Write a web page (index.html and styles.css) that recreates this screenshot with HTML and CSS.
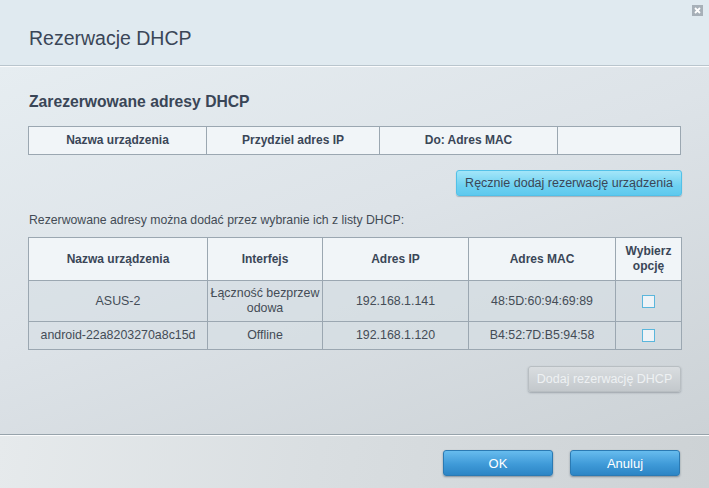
FILE: index.html
```html
<!DOCTYPE html>
<html lang="pl">
<head>
<meta charset="utf-8">
<title>Rezerwacje DHCP</title>
<link rel="stylesheet" href="styles.css">
</head>
<body>
<div class="dialog">
  <header class="hdr">
    <h1 class="title">Rezerwacje DHCP</h1>
    <span class="close" aria-label="Zamknij">
      <svg width="11" height="11" viewBox="0 0 11 11"><rect width="11" height="11" fill="#a7b0b8"/><path d="M3 3 L8 8 M8 3 L3 8" stroke="#fff" stroke-width="1.8"/></svg>
    </span>
  </header>
  <main class="content">
    <h2 class="section">Zarezerwowane adresy DHCP</h2>
    <table class="grid t1">
      <colgroup><col class="c1a"><col class="c1b"><col class="c1c"><col></colgroup>
      <tr><th>Nazwa urządzenia</th><th>Przydziel adres IP</th><th>Do: Adres MAC</th><th></th></tr>
    </table>
    <div class="btnrow first">
      <button class="btn btn-cyan">Ręcznie dodaj rezerwację urządzenia</button>
    </div>
    <p class="hint">Rezerwowane adresy można dodać przez wybranie ich z listy DHCP:</p>
    <table class="grid t2">
      <colgroup><col class="c2a"><col class="c2b"><col class="c2c"><col class="c2d"><col></colgroup>
      <tr><th>Nazwa urządzenia</th><th>Interfejs</th><th>Adres IP</th><th>Adres MAC</th><th>Wybierz opcję</th></tr>
      <tr><td>ASUS-2</td><td class="wrap">Łączność bezprzewodowa</td><td>192.168.1.141</td><td>48:5D:60:94:69:89</td><td><span class="check"></span></td></tr>
      <tr><td>android-22a8203270a8c15d</td><td>Offline</td><td>192.168.1.120</td><td>B4:52:7D:B5:94:58</td><td><span class="check"></span></td></tr>
    </table>
    <div class="btnrow second">
      <button class="btn btn-grey" disabled>Dodaj rezerwację DHCP</button>
    </div>
  </main>
  <footer class="foot">
    <button class="btn btn-blue">OK</button>
    <button class="btn btn-blue">Anuluj</button>
  </footer>
</div>
</body>
</html>
```
FILE: styles.css
```css
* { box-sizing: border-box; }
html, body { margin: 0; padding: 0; }
body {
  width: 709px;
  height: 488px;
  overflow: hidden;
  font-family: "Liberation Sans", Arial, sans-serif;
  color: #3b4757;
}
.dialog {
  width: 709px;
  height: 488px;
  display: flex;
  flex-direction: column;
}
.hdr {
  position: relative;
  height: 67px;
  flex: none;
  background: #e0eaf0;
  border-bottom: 1px solid #fbfcfd;
  box-shadow: inset 0 -1px 0 #b9c5cd;
  padding: 26px 0 0 29px;
}
.title {
  margin: 0;
  font-weight: normal;
  font-size: 19.5px;
  line-height: 24px;
  color: #3a4657;
}
.close {
  position: absolute;
  top: 5px;
  right: 6px;
  width: 11px;
  height: 11px;
  line-height: 0;
}
.content {
  flex: 1;
  padding: 25px 27px 0 28px;
  background: linear-gradient(160deg, #e6edf1 0%, #dde3e8 45%, #ccd2d6 100%);
  border-bottom: 1px solid #97a3ab;
}
.section {
  margin: 0 0 14px 1px;
  font-size: 15.7px;
  line-height: 20px;
  font-weight: bold;
  color: #3a4657;
}
.grid {
  width: 654px;
  border-collapse: collapse;
  table-layout: fixed;
}
.t1 { width: 653px; }
.grid th, .grid td {
  border: 1px solid #9ba7b1;
  text-align: center;
  vertical-align: middle;
}
.grid th {
  background: #f1f5f8;
  font-size: 12px;
  font-weight: bold;
  line-height: 15px;
  padding: 6px 2px;
  color: #3a4657;
}
.grid td {
  font-size: 12.4px;
  line-height: 14.5px;
  padding: 4px 2px;
  color: #444c56;
  background: rgba(214, 222, 228, 0.55);
}
.c1a { width: 178px; }
.c1b { width: 173px; }
.c1c { width: 178px; }
.c2a { width: 179px; }
.c2b { width: 115px; }
.c2c { width: 146px; }
.c2d { width: 147px; }
.grid td.wrap { word-break: break-all; line-height: 15px; padding: 5px 2px; }
.check {
  display: block;
  width: 13px;
  height: 13px;
  margin: 3px auto;
  border: 1px solid #5ab6dc;
  background: #eef3f7;
}
.btnrow {
  display: flex;
  justify-content: flex-end;
}
.btnrow.first { margin-top: 15px; }
.btnrow.second { margin-top: 16px; padding-right: 1px; }
.btn {
  font-family: "Liberation Sans", Arial, sans-serif;
  font-size: 12.5px;
  border-radius: 3px;
  height: 26px;
  padding: 0;
  white-space: nowrap;
  cursor: pointer;
}
.btn-cyan {
  width: 226px;
  color: #3a4657;
  background: linear-gradient(#a3e6f9, #6fd1f1 60%, #5ec9ee);
  border: 1px solid #52c1e8;
  box-shadow: 0 1px 1px rgba(60, 90, 110, 0.35);
}
.btn-grey {
  width: 153px;
  color: #eef1f3;
  background: linear-gradient(#d9dde0, #c3c8cc);
  border: 1px solid #b8bec2;
  box-shadow: 0 1px 2px rgba(60, 70, 80, 0.35);
}
.hint {
  margin: 16px 0 9px 1px;
  font-size: 12.25px;
  line-height: 16px;
  color: #434b55;
}
.foot {
  height: 53px;
  flex: none;
  border-top: 1px solid #fbfcfd;
  background: linear-gradient(100deg, #e6eaec 0%, #d9dee1 45%, #cdd2d5 100%);
  display: flex;
  justify-content: flex-end;
  align-items: flex-start;
  gap: 17px;
  padding: 14px 29px 0 0;
}
.btn-blue {
  width: 110px;
  height: 26px;
  color: #ffffff;
  font-size: 13px;
  background: linear-gradient(#67bcee, #3f9ad8 55%, #2c85c5);
  border: 1px solid #2b7ab3;
  box-shadow: 0 1px 2px rgba(30, 50, 70, 0.45);
}
```
